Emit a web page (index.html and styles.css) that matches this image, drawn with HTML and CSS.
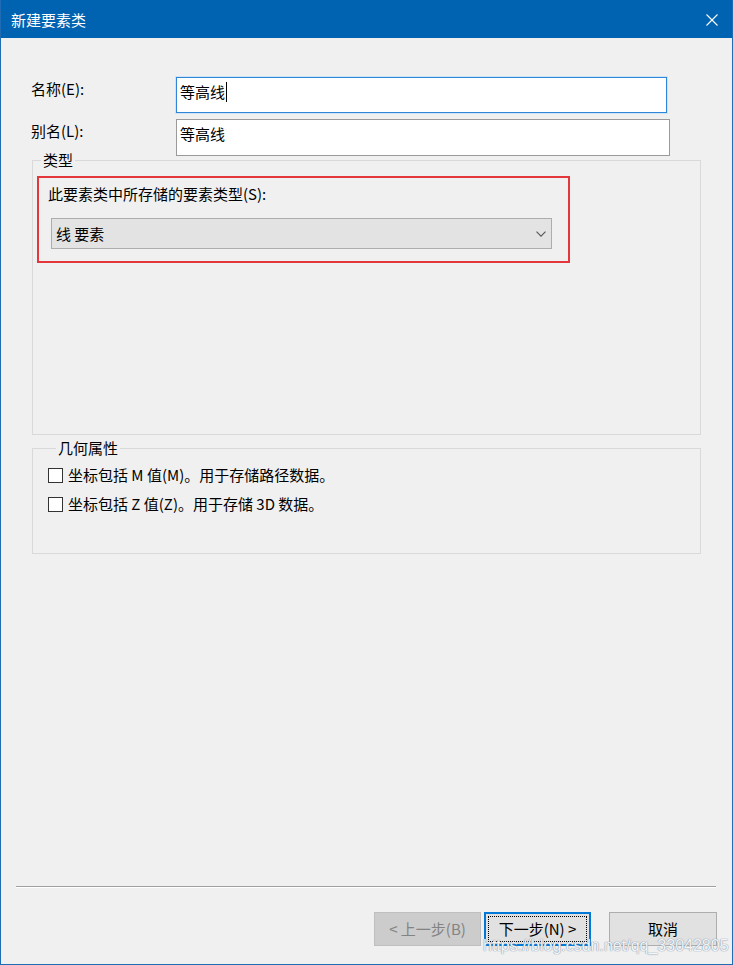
FILE: index.html
```html
<!DOCTYPE html>
<html lang="zh-CN">
<head>
<meta charset="utf-8">
<title>新建要素类</title>
<link rel="stylesheet" href="styles.css">
</head>
<body>
<div class="window">
  <div class="titlebar">
    <span class="title">新建要素类</span>
    <svg class="close" width="12" height="12" viewBox="0 0 12 12"><path d="M0.5 0.5 L11.5 11.5 M11.5 0.5 L0.5 11.5" stroke="#fff" stroke-width="1.1" fill="none"/></svg>
  </div>
  <div class="content">
    <div class="form">
      <label class="lbl">名称(E):</label>
      <div class="field focus">等高线<span class="caret"></span></div>
      <label class="lbl">别名(L):</label>
      <div class="field wide">等高线</div>
    </div>
    <fieldset class="group group-type">
      <legend>类型</legend>
      <div class="highlight">
        <div class="hl-label">此要素类中所存储的要素类型(S):</div>
        <div class="combo">
          <span>线 要素</span>
          <svg class="chev" width="10" height="6" viewBox="0 0 10 6"><path d="M0.5 0.6 L5 5.1 L9.5 0.6" stroke="#555" stroke-width="1.1" fill="none"/></svg>
        </div>
      </div>
    </fieldset>
    <fieldset class="group group-geo">
      <legend>几何属性</legend>
      <div class="check"><span class="box"></span><span>坐标包括 M 值(M)。用于存储路径数据。</span></div>
      <div class="check"><span class="box"></span><span>坐标包括 Z 值(Z)。用于存储 3D 数据。</span></div>
    </fieldset>
    <div class="spacer"></div>
    <div class="separator"></div>
    <div class="buttons">
      <div class="btn disabled">&lt; 上一步(B)</div>
      <div class="btn default"><span class="focus-rect">下一步(N) &gt;</span></div>
      <div class="btn cancel">取消</div>
    </div>
  </div>
  <div class="watermark">https://blog.csdn.net/qq_33042805</div>
</div>
</body>
</html>
```

FILE: styles.css
```css
html, body {
  margin: 0;
  padding: 0;
  background: #f0f0f0;
}

.window {
  position: relative;
  width: 733px;
  height: 965px;
  box-sizing: border-box;
  border: 1px solid #1f6cb4;
  border-top: 0;
  background: #f0f0f0;
  display: flex;
  flex-direction: column;
  font-family: "Noto Sans CJK SC", "Noto Sans", sans-serif;
  font-size: 15px;
  line-height: 20px;
  color: #000;
}

.titlebar {
  height: 38px;
  flex: none;
  background: #0063b1;
  display: flex;
  align-items: center;
  justify-content: space-between;
  padding: 0 14px 0 10px;
  color: #fff;
}

.title {
  font-size: 15px;
  line-height: 20px;
  margin-top: 1px;
}

.close {
  display: block;
  margin-top: 1px;
}

.content {
  flex: 1;
  display: flex;
  flex-direction: column;
}

.form {
  display: grid;
  grid-template-columns: 145px auto;
  row-gap: 6px;
  justify-items: start;
  align-items: start;
  padding: 39px 0 0 30px;
}

.lbl {
  padding-top: 2px;
}

.field {
  box-sizing: border-box;
  width: 491px;
  height: 36px;
  background: #fff;
  border: 1px solid #9a9a9a;
  padding: 4px 3px;
  display: flex;
  align-items: flex-start;
}

.field.focus {
  border-color: #2f86d9;
  box-shadow: 0 0 0 1px #cfe3f6;
}

.field.wide {
  width: 494px;
  height: 37px;
}

.caret {
  display: inline-block;
  width: 1px;
  height: 20px;
  background: #000;
  margin-left: 1px;
}

.group {
  box-sizing: border-box;
  width: 669px;
  margin: 0 0 0 31px;
  padding: 0;
  border: 1px solid #d9d9d9;
  min-width: 0;
}

.group legend {
  padding: 0 2px;
  margin-left: 8px;
  line-height: 20px;
}

.group-type {
  margin-top: -6px;
  height: 285px;
}

.group-geo {
  margin-top: 3px;
  height: 116px;
  padding: 7px 0 0 15px;
}

.highlight {
  box-sizing: border-box;
  width: 533px;
  height: 87px;
  margin: 6px 0 0 4px;
  border: 2px solid #e3373c;
  padding: 6px 0 0 9px;
}

.combo {
  box-sizing: border-box;
  width: 501px;
  height: 31px;
  margin: 14px 0 0 3px;
  background: #e3e3e3;
  border: 1px solid #adadad;
  display: flex;
  align-items: center;
  justify-content: space-between;
  padding: 0 5px 0 4px;
}

.chev {
  display: block;
}

.check {
  display: flex;
  align-items: center;
  height: 20px;
  margin-bottom: 9px;
}

.box {
  box-sizing: border-box;
  width: 15px;
  height: 15px;
  border: 1px solid #333;
  background: #fff;
  margin-right: 5px;
  flex: none;
}

.spacer {
  flex: 1;
}

.separator {
  margin: 0 16px 24px 15px;
  border-top: 1px solid #a0a0a0;
  border-bottom: 1px solid #fff;
}

.buttons {
  display: flex;
  justify-content: flex-end;
  padding: 0 15px 18px 0;
}

.btn {
  box-sizing: border-box;
  width: 107px;
  height: 34px;
  background: #e1e1e1;
  border: 1px solid #adadad;
  display: flex;
  align-items: center;
  justify-content: center;
}

.btn.disabled {
  background: #cccccc;
  border-color: #bfbfbf;
  color: #838383;
  margin-right: 3px;
}

.btn.default {
  border: 2px solid #0078d7;
  padding: 2px;
  margin-right: 18px;
}

.focus-rect {
  box-sizing: border-box;
  width: 100%;
  height: 100%;
  border: 1px dotted #000;
  display: flex;
  align-items: center;
  justify-content: center;
}

.btn.cancel {
  width: 108px;
}

.watermark {
  position: absolute;
  left: 482px;
  top: 936px;
  font-family: "Liberation Sans", Arial, sans-serif;
  font-size: 16px;
  line-height: 20px;
  color: rgba(255, 255, 255, 0.92);
  text-shadow: 0 0 1px #7f93aa, 0 0 1px #7f93aa;
  white-space: nowrap;
}
```
